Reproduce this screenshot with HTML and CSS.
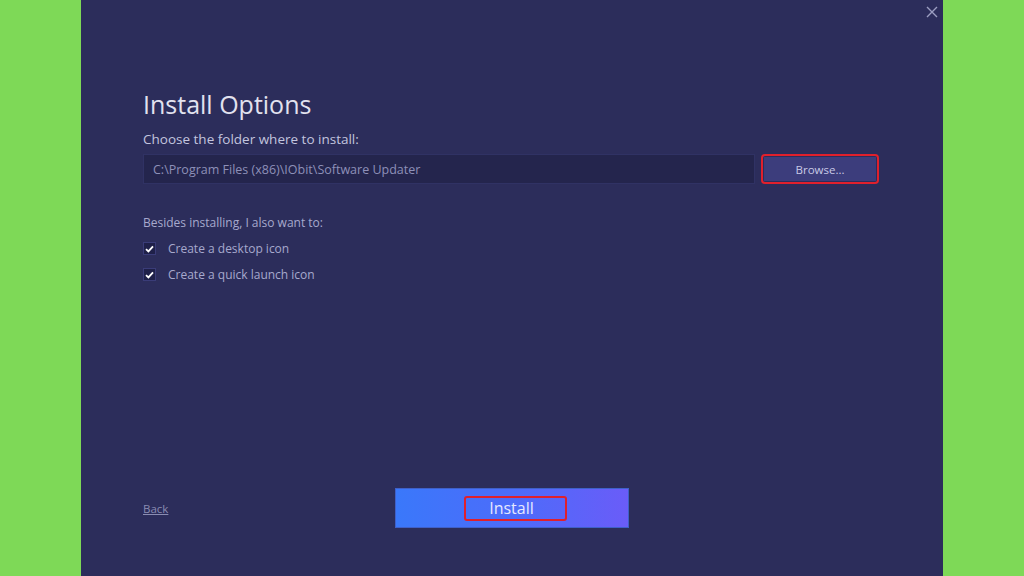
FILE: index.html
```html
<!DOCTYPE html>
<html>
<head>
<meta charset="utf-8">
<link rel="stylesheet" href="styles.css">
</head>
<body>
<div class="window">
  <button class="close" aria-label="Close">
    <svg width="12" height="12" viewBox="0 0 12 12"><path d="M1 1L11 11M11 1L1 11" stroke="#9c9ec2" stroke-width="1.4" fill="none"/></svg>
  </button>
  <div class="content">
    <h1 class="title">Install Options</h1>
    <div class="label">Choose the folder where to install:</div>
    <div class="path-row">
      <div class="path-input">C:\Program Files (x86)\IObit\Software Updater</div>
      <div class="browse"><span>Browse...</span></div>
    </div>
    <div class="options-label">Besides installing, I also want to:</div>
    <div class="option">
      <span class="check"><svg width="9" height="8" viewBox="0 0 9 8"><path d="M1 4.2L3.4 6.4L8 1.4" stroke="#ffffff" stroke-width="1.8" fill="none"/></svg></span>
      <span>Create a desktop icon</span>
    </div>
    <div class="option">
      <span class="check"><svg width="9" height="8" viewBox="0 0 9 8"><path d="M1 4.2L3.4 6.4L8 1.4" stroke="#ffffff" stroke-width="1.8" fill="none"/></svg></span>
      <span>Create a quick launch icon</span>
    </div>
    <div class="spacer"></div>
    <div class="footer">
      <a class="back" href="#">Back</a>
      <div class="install"><span class="install-text">Install</span></div>
      <div></div>
    </div>
  </div>
</div>
</body>
</html>
```

FILE: styles.css
```css
* { box-sizing: border-box; }
html, body { margin: 0; height: 100%; }
body {
  background: #7ed957;
  display: flex;
  justify-content: center;
  font-family: "Open Sans", "Noto Sans", sans-serif;
}
.window {
  position: relative;
  width: 862px;
  height: 576px;
  background: #2c2d5b;
}
.close {
  position: absolute;
  top: 6px;
  right: 5px;
  width: 12px;
  height: 12px;
  padding: 0;
  border: 0;
  background: none;
  display: flex;
}
.content {
  height: 100%;
  display: flex;
  flex-direction: column;
  padding: 88px 64px 48px 62px;
}
.title {
  margin: 0;
  font-weight: 400;
  font-size: 25px;
  line-height: 32px;
  color: #e2e2ef;
}
.label {
  margin-top: 10px;
  font-size: 13.5px;
  line-height: 19px;
  color: #c3c5df;
}
.path-row {
  margin-top: 5px;
  display: flex;
  gap: 6px;
  height: 30px;
}
.path-input {
  flex: 1;
  background: #24254d;
  border: 1px solid #303264;
  padding: 0 9px;
  display: flex;
  align-items: center;
  font-size: 12.5px;
  color: #8e90b8;
}
.browse {
  width: 118px;
  border: 2px solid #e0202c;
  border-radius: 4px;
  padding: 1px;
  display: flex;
}
.browse span {
  flex: 1;
  background: #3c3d7c;
  display: flex;
  align-items: center;
  justify-content: center;
  font-size: 11.5px;
  color: #c9cae6;
}
.options-label {
  margin-top: 30px;
  font-size: 12px;
  line-height: 17px;
  color: #a7a9cd;
}
.option {
  margin-top: 9px;
  display: flex;
  align-items: center;
  gap: 12px;
  font-size: 12px;
  line-height: 17px;
  color: #a7a9cd;
}
.check {
  width: 13px;
  height: 13px;
  background: #1f2049;
  border: 1px solid #3a3c78;
  display: flex;
  align-items: center;
  justify-content: center;
}
.spacer { flex: 1; }
.footer {
  display: grid;
  grid-template-columns: 1fr 233px 1fr;
  align-items: center;
  margin-right: -2px;
}
.back {
  font-size: 11.5px;
  color: #8a8cb2;
  text-decoration: underline;
  justify-self: start;
}
.install {
  height: 40px;
  margin-left: -1px;
  background: linear-gradient(90deg, #3a78fa 0%, #4c6cfa 50%, #6a5cf8 100%);
  border: 1px solid #3f60c8;
  display: flex;
  align-items: center;
  justify-content: center;
}
.install-text {
  padding: 0 31px 0 23px;
  height: 25px;
  border: 2px solid #e0202c;
  border-radius: 3px;
  display: flex;
  align-items: center;
  font-size: 16px;
  color: #e6e8ff;
  margin-left: 8px;
}
```
